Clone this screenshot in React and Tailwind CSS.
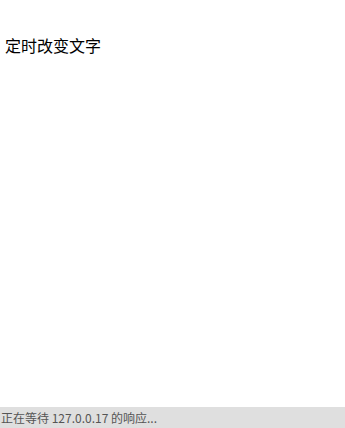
export default function App() {
  return (
    <div
      className="relative w-[345px] h-[428px] bg-white overflow-hidden"
      style={{ fontFamily: '"Noto Sans CJK SC", "Liberation Sans", sans-serif' }}
    >
      <div className="pt-[33px] pl-[5px] text-[16px] leading-[24px] text-black">
        定时改变文字
      </div>
      <div className="absolute left-0 bottom-0 w-full h-[21px] bg-[#dfdfdf] pl-[1px] text-[12px] leading-[21px] text-[#555555]">
        正在等待 127.0.0.17 的响应...
      </div>
    </div>
  );
}
